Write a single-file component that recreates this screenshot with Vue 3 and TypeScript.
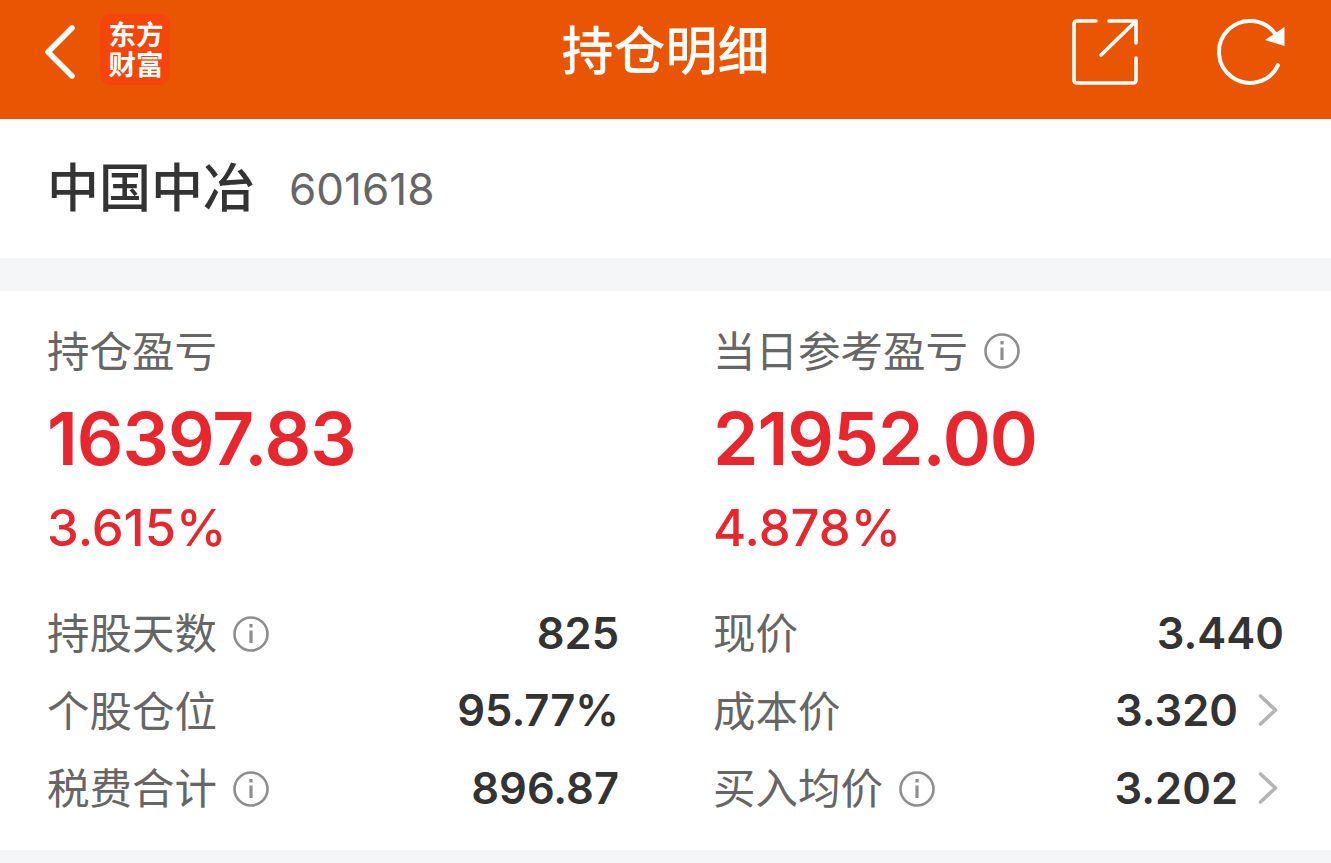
<template>
  <div class="page">
    <header class="topbar">
      <div class="topbar-left">
        <svg class="back" width="34" height="56" viewBox="0 0 34 56" fill="none" stroke="#fff" stroke-width="5.5" stroke-linecap="round" stroke-linejoin="round">
          <path d="M28 4 L4 28 L28 52" />
        </svg>
        <div class="logo"><span>东方财富</span></div>
      </div>
      <div class="title">持仓明细</div>
      <div class="topbar-right">
        <svg width="68" height="68" viewBox="0 0 68 68" fill="none" stroke="#fff" stroke-width="3.6" stroke-linecap="round" stroke-linejoin="round">
          <path d="M25 3 H6 Q3 3 3 6 V62 Q3 65 6 65 H62 Q65 65 65 62 V40" />
          <path d="M30 37 L65 3" />
          <path d="M38 3 H65 V25" />
        </svg>
        <svg width="70" height="68" viewBox="0 0 70 68" fill="none">
          <path d="M62 47.2 A31 31 0 1 1 59.5 16.3" stroke="#fff" stroke-width="4" stroke-linecap="round" />
          <path d="M68.5 9 V28 L49 22 Z" fill="#fff" />
        </svg>
      </div>
    </header>

    <section class="stock">
      <span class="stock-name">中国中冶</span>
      <span class="stock-code">601618</span>
    </section>

    <section class="panel">
      <div class="summary">
        <div v-for="s in summaries" :key="s.label" class="summary-col">
          <div class="summary-label">
            {{ s.label }}
            <svg v-if="s.info" class="info" width="38" height="38" viewBox="0 0 38 38" fill="none" stroke="#8e8e8e">
              <circle cx="19" cy="19" r="16.5" stroke-width="2.6" />
              <path d="M19 15.5 V28" stroke-width="3.2" />
              <path d="M19 9 V12.5" stroke-width="3.2" />
            </svg>
          </div>
          <div class="summary-value">{{ s.value }}</div>
          <div class="summary-rate">{{ s.rate }}</div>
        </div>
      </div>

      <div class="rows">
        <div v-for="r in rows" :key="r.label" class="row">
          <span class="row-label">
            {{ r.label }}
            <svg v-if="r.info" class="info" width="38" height="38" viewBox="0 0 38 38" fill="none" stroke="#8e8e8e">
              <circle cx="19" cy="19" r="16.5" stroke-width="2.6" />
              <path d="M19 15.5 V28" stroke-width="3.2" />
              <path d="M19 9 V12.5" stroke-width="3.2" />
            </svg>
          </span>
          <span class="row-value">{{ r.value }}</span>
          <svg v-if="r.arrow" class="chevron" width="20" height="32" viewBox="0 0 20 32" fill="none" stroke="#b4b4b4" stroke-width="3.6" stroke-linecap="round" stroke-linejoin="round">
            <path d="M2.5 2 L17.5 16 L2.5 30" />
          </svg>
        </div>
      </div>
    </section>
  </div>
</template>

<script setup lang="ts">
interface Summary {
  label: string
  value: string
  rate: string
  info?: boolean
}

interface Row {
  label: string
  value: string
  info?: boolean
  arrow?: boolean
}

const summaries: Summary[] = [
  { label: '持仓盈亏', value: '16397.83', rate: '3.615%' },
  { label: '当日参考盈亏', value: '21952.00', rate: '4.878%', info: true },
]

// grid fills left to right, so each pair is one visual line
const rows: Row[] = [
  { label: '持股天数', value: '825', info: true },
  { label: '现价', value: '3.440' },
  { label: '个股仓位', value: '95.77%' },
  { label: '成本价', value: '3.320', arrow: true },
  { label: '税费合计', value: '896.87', info: true },
  { label: '买入均价', value: '3.202', info: true, arrow: true },
]
</script>

<style scoped>
.page {
  width: 1331px;
  height: 863px;
  overflow: hidden;
  background: #f5f6f8;
  font-family: Inter, "Noto Sans CJK SC", sans-serif;
}

.topbar {
  height: 119px;
  box-sizing: border-box;
  background: #ea5504;
  display: flex;
  align-items: center;
  justify-content: space-between;
  padding: 0 45px 15px 44px;
  position: relative;
}

.topbar-left {
  display: flex;
  align-items: center;
  gap: 22px;
}

.back {
  display: block;
}

.logo {
  width: 70px;
  height: 71px;
  box-sizing: border-box;
  padding-left: 2px;
  margin-top: -5px;
  border-radius: 11px;
  background: #f4450a;
  color: #fff;
  font-size: 27.5px;
  line-height: 30px;
  font-weight: 700;
  display: flex;
  align-items: center;
  justify-content: center;
}

.logo span {
  width: 56px;
  text-align: center;
}

.title {
  position: absolute;
  left: 0;
  right: 0;
  top: 20px;
  text-align: center;
  color: #fff;
  font-size: 52px;
  line-height: 64px;
  font-weight: 500;
  pointer-events: none;
}

.topbar-right {
  display: flex;
  align-items: center;
  gap: 77px;
}

.stock {
  height: 139px;
  box-sizing: border-box;
  background: #fff;
  display: flex;
  align-items: center;
  gap: 34px;
  padding: 0 47px;
}

.stock-name {
  font-size: 52px;
  line-height: 60px;
  font-weight: 500;
  color: #333;
}

.stock-code {
  font-size: 44px;
  color: #666;
}

.panel {
  margin-top: 33px;
  height: 559px;
  background: #fff;
  padding: 27px 47px 0 47px;
  box-sizing: border-box;
}

.summary {
  display: grid;
  grid-template-columns: 666px 1fr;
}

.summary-label {
  display: flex;
  align-items: center;
  gap: 15px;
  height: 60px;
  font-size: 42.5px;
  color: #666;
}

.summary-value {
  margin-top: 23px;
  height: 76px;
  line-height: 76px;
  font-size: 73px;
  letter-spacing: -1px;
  font-weight: 600;
  color: #e8262e;
}

.summary-rate {
  margin-top: 23px;
  height: 56px;
  line-height: 56px;
  font-size: 50.7px;
  font-weight: 500;
  color: #e8262e;
}

.rows {
  margin-top: 38px;
  display: grid;
  grid-template-columns: 572px 1fr;
  column-gap: 94px;
  grid-auto-rows: 77.5px;
}

.row {
  display: flex;
  align-items: center;
}

.row-label {
  display: flex;
  align-items: center;
  gap: 15px;
  font-size: 42.5px;
  color: #666;
  margin-right: auto;
  margin-bottom: 4px;
}

.row-value {
  font-size: 43.5px;
  font-weight: 600;
  color: #333;
}

.chevron {
  margin-left: 20px;
  margin-right: 6px;
}

.info {
  display: block;
  margin-top: 6px;
}
</style>

<style>
html, body {
  margin: 0;
  background: #f5f6f8;
}
</style>
